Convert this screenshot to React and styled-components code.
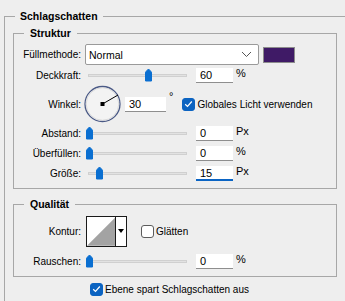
import React from 'react'
import styled, { createGlobalStyle } from 'styled-components'

const GlobalStyle = createGlobalStyle`
  html, body {
    margin: 0;
    padding: 0;
    background: #eeeeee;
    overflow: hidden;
  }
  body {
    font-family: "Liberation Sans", Arial, sans-serif;
    font-size: 10px;
    color: #000;
  }
`

const Page = styled.div`
  width: 345px;
  height: 301px;
  padding-left: 4px;
  box-sizing: border-box;
  overflow: hidden;
`

const OuterSet = styled.fieldset`
  margin: 9px 0 0 0;
  padding: 3px 0 0 8px;
  width: 380px;
  height: 320px;
  border: 1px solid #a7a7a7;
  box-sizing: border-box;
  min-width: 0;
`

const GroupSet = styled.fieldset`
  margin: ${p => p.$top || 0}px 0 0 0;
  padding: ${p => p.$padTop || 0}px 0 5px 0;
  width: 324px;
  border: 1px solid #a7a7a7;
  box-sizing: border-box;
  min-width: 0;
`

const Legend = styled.legend`
  margin-left: ${p => p.$left || 2}px;
  padding: 0 ${p => p.$pad || 5}px;
  font-weight: bold;
  font-size: 10.5px;
  line-height: 14px;
  height: 14px;
`

const Row = styled.div`
  display: flex;
  align-items: center;
  height: ${p => p.$h}px;
`

const Label = styled.div`
  width: 67px;
  text-align: right;
  margin-right: ${p => p.$gap || 4}px;
  white-space: nowrap;
  flex-shrink: 0;
`

const Select = styled.div`
  width: 174px;
  height: 21px;
  box-sizing: border-box;
  background: #fff;
  border: 1px solid #9a9a9a;
  border-radius: 2px;
  display: flex;
  align-items: center;
  justify-content: space-between;
  padding: 0 6px 0 3px;
  font-size: 10.5px;
`

const Swatch = styled.div`
  width: 32px;
  height: 16px;
  box-sizing: border-box;
  margin-left: 4px;
  background: ${p => p.$color};
  border: 1px solid #8c8c8c;
`

const SliderWrap = styled.div`
  position: relative;
  width: 104px;
  height: 14px;
  flex-shrink: 0;
`

const Track = styled.div`
  position: absolute;
  left: 3px;
  right: 2px;
  top: 6px;
  height: 3px;
  box-sizing: border-box;
  background: #e2e2e2;
  border: 1px solid #d0d0d0;
`

const Thumb = styled.svg`
  position: absolute;
  top: 0;
`

const NumBox = styled.div`
  width: 37px;
  height: 15px;
  box-sizing: border-box;
  margin-left: ${p => p.$ml || 7}px;
  background: #fff;
  border-bottom: ${p => (p.$focus ? '2px solid #0a64c4' : '1px solid #8e8e8e')};
  padding: 1px 0 0 4px;
  font-size: 11px;
  line-height: 13px;
`

const Unit = styled.span`
  margin-left: 3px;
  font-size: 11px;
  align-self: flex-start;
  margin-top: ${p => p.$mt || 2}px;
`

const Dial = styled.svg`
  flex-shrink: 0;
`

const Check = styled.div`
  width: 13px;
  height: 13px;
  box-sizing: border-box;
  border-radius: 3px;
  margin-left: ${p => p.$ml || 0}px;
  margin-right: 2px;
  flex-shrink: 0;
  background: ${p => (p.$on ? '#0b63c1' : '#fff')};
  border: 1px solid ${p => (p.$on ? '#0b63c1' : '#5c5c5c')};
  display: flex;
  align-items: center;
  justify-content: center;
`

const CheckText = styled.span`
  white-space: nowrap;
`

const Contour = styled.div`
  width: 41px;
  height: 31px;
  box-sizing: border-box;
  border: 1px solid #1a1a1a;
  background: #fff;
  display: flex;
  flex-shrink: 0;
`

const ContourDrop = styled.div`
  width: 10px;
  border-left: 1px solid #1a1a1a;
  display: flex;
  align-items: center;
  justify-content: center;
`

const BottomRow = styled.div`
  display: flex;
  align-items: center;
  height: 18px;
  margin-top: 3px;
  padding-left: 77px;
`

const Slider = ({ pos }) => (
  <SliderWrap>
    <Track />
    <Thumb width="9" height="14" viewBox="0 0 9 14" style={{ left: pos - 4 }}>
      <path d="M1.5 5 Q1.5 4 2.5 3 L4.5 1 L6.5 3 Q7.5 4 7.5 5 V13 H1.5 Z" fill="#0a6fd1" stroke="#0a6fd1" strokeWidth="1" strokeLinejoin="round" />
    </Thumb>
  </SliderWrap>
)

const Tick = () => (
  <svg width="9" height="8" viewBox="0 0 9 8">
    <path d="M1.2 4.2 L3.5 6.4 L7.8 1.5" fill="none" stroke="#fff" strokeWidth="1.2" />
  </svg>
)

const SliderRow = ({ label, pos, value, unit, focus }) => (
  <Row $h={20}>
    <Label>{label}</Label>
    <Slider pos={pos} />
    <NumBox $focus={focus}>{value}</NumBox>
    <Unit>{unit}</Unit>
  </Row>
)

export default function App() {
  return (
    <Page>
      <GlobalStyle />
      <OuterSet>
        <Legend $left={2} $pad={5}>Schlagschatten</Legend>
        <GroupSet $padTop={4}>
          <Legend $left={10} $pad={6}>Struktur</Legend>
          <Row $h={21}>
            <Label>Füllmethode:</Label>
            <Select>
              <span>Normal</span>
              <svg width="11" height="7" viewBox="0 0 11 7">
                <path d="M1 1 L5.5 5.5 L10 1" fill="none" stroke="#555" strokeWidth="1" />
              </svg>
            </Select>
            <Swatch $color="#3f1a66" />
          </Row>
          <SliderRow label="Deckkraft:" pos={63} value="60" unit="%" />
          <Row $h={38}>
            <Label $gap={3}>Winkel:</Label>
            <Dial width="38" height="38" viewBox="0 0 38 38">
              <circle cx="18.5" cy="19" r="17.5" fill="#f3f3f3" stroke="#4b5a86" strokeWidth="1.3" />
              <circle cx="18.5" cy="19" r="16.3" fill="none" stroke="#d6d6d6" strokeWidth="0.8" />
              <line x1="18.5" y1="19" x2="34" y2="10" stroke="#000" strokeWidth="1" />
              <rect x="16.5" y="17" width="4" height="4" fill="#000" />
            </Dial>
            <NumBox $ml={3} style={{ width: 41 }}>30</NumBox>
            <Unit $mt={5}>°</Unit>
            <Check $on $ml={9}><Tick /></Check>
            <CheckText>Globales Licht verwenden</CheckText>
          </Row>
          <SliderRow label="Abstand:" pos={4} value="0" unit="Px" />
          <SliderRow label="Überfüllen:" pos={4} value="0" unit="%" />
          <SliderRow label="Größe:" pos={14} value="15" unit="Px" focus />
        </GroupSet>
        <GroupSet $top={8}>
          <Legend $left={10} $pad={6}>Qualität</Legend>
          <Row $h={40}>
            <Label $gap={5}>Kontur:</Label>
            <Contour>
              <svg width="29" height="29" viewBox="0 0 29 29">
                <polygon points="0,29 29,0 29,29" fill="#a3a3a3" />
              </svg>
              <ContourDrop>
                <svg width="6" height="4" viewBox="0 0 6 4">
                  <polygon points="0,0 6,0 3,4" fill="#000" />
                </svg>
              </ContourDrop>
            </Contour>
            <Check $ml={14}></Check>
            <CheckText>Glätten</CheckText>
          </Row>
          <SliderRow label="Rauschen:" pos={4} value="0" unit="%" />
        </GroupSet>
        <BottomRow>
          <Check $on><Tick /></Check>
          <CheckText>Ebene spart Schlagschatten aus</CheckText>
        </BottomRow>
      </OuterSet>
    </Page>
  )
}
